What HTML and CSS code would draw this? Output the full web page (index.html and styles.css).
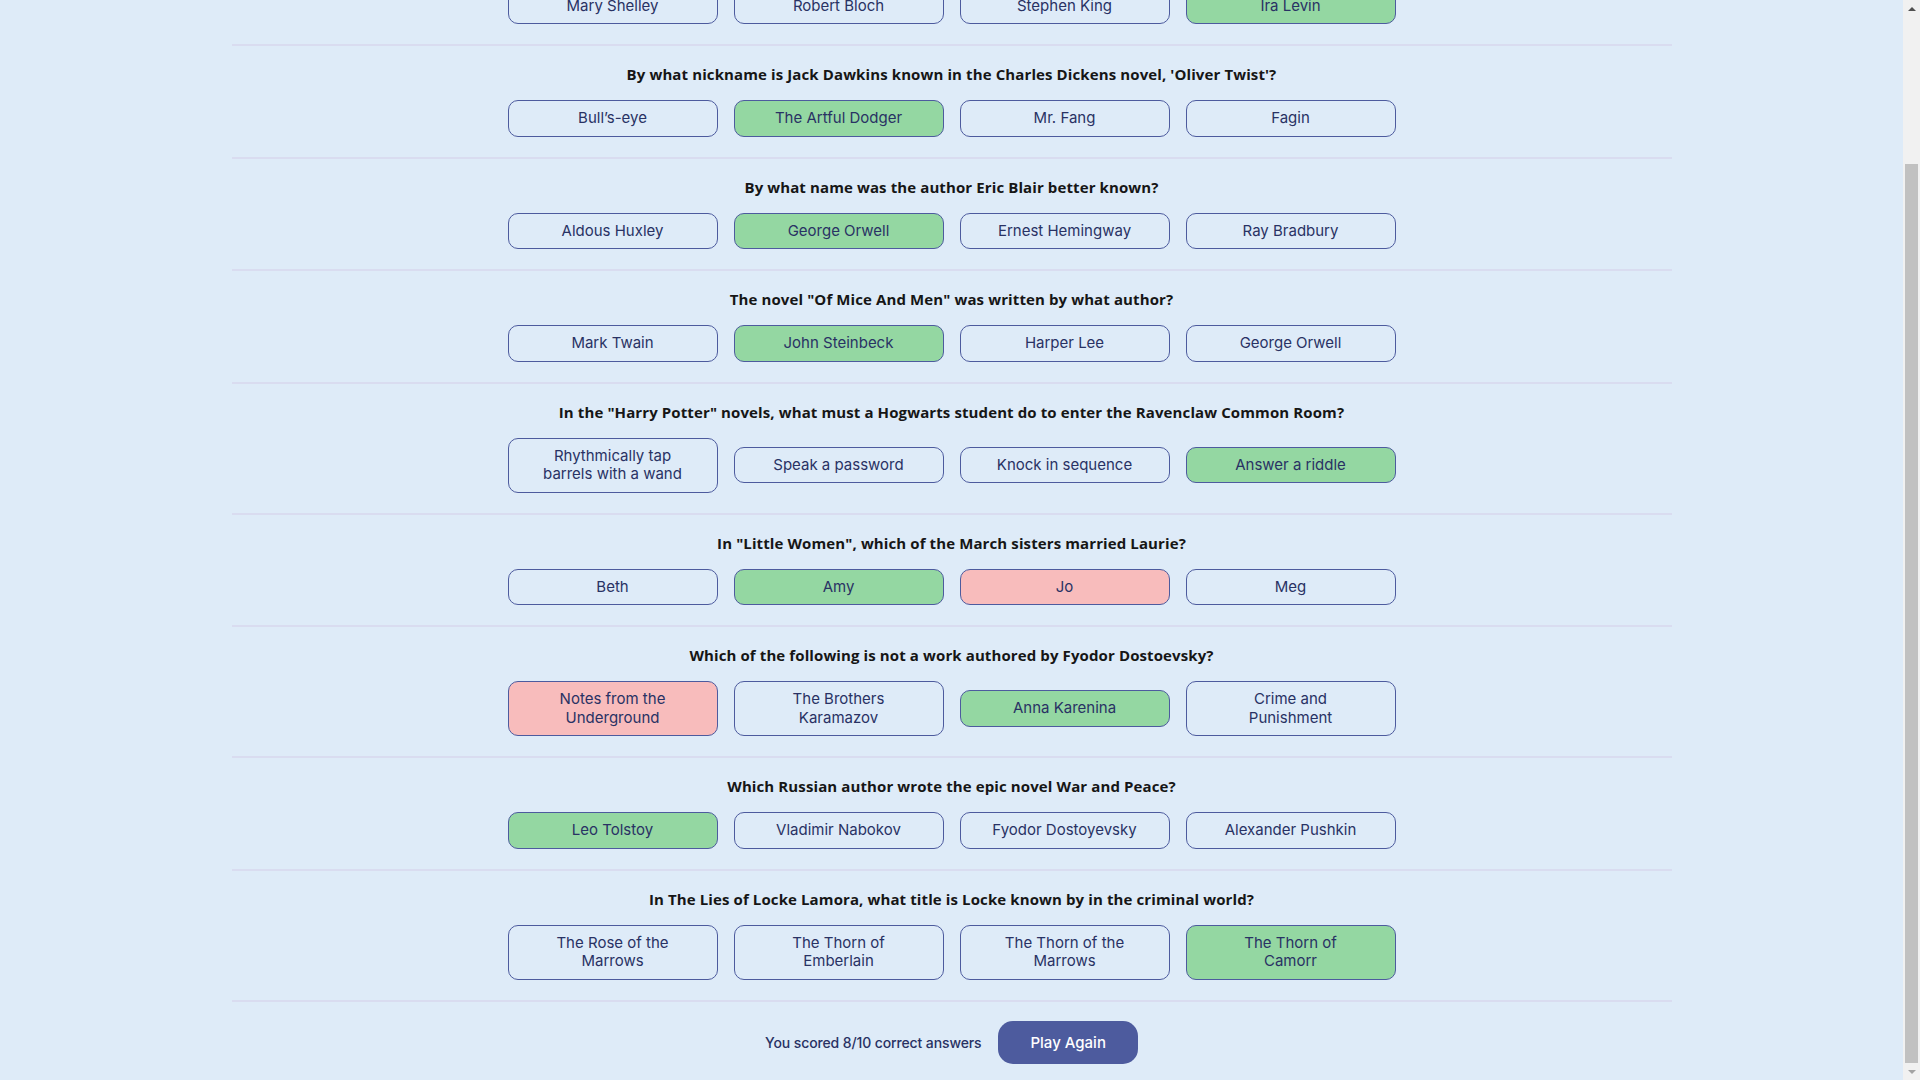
FILE: index.html
```html
<!DOCTYPE html>
<html lang="en">
<head>
<meta charset="utf-8">
<title>Quizzical</title>
<link rel="stylesheet" href="styles.css">
</head>
<body>
<main class="quiz">
  <section class="question">
    <h2 class="q-text">Who is the author of the novel "Jurassic Park"?</h2>
    <div class="answers">
      <button class="answer">Stephen King</button>
      <button class="answer correct">Michael Crichton</button>
      <button class="answer">Dean Koontz</button>
      <button class="answer">Tom Clancy</button>
    </div>
  </section>
  <section class="question">
    <h2 class="q-text">Who wrote the 1967 horror novel "Rosemary's Baby"?</h2>
    <div class="answers">
      <button class="answer">Mary Shelley</button>
      <button class="answer">Robert Bloch</button>
      <button class="answer">Stephen King</button>
      <button class="answer correct">Ira Levin</button>
    </div>
  </section>
  <section class="question">
    <h2 class="q-text">By what nickname is Jack Dawkins known in the Charles Dickens novel, 'Oliver Twist'?</h2>
    <div class="answers">
      <button class="answer">Bull’s-eye</button>
      <button class="answer correct">The Artful Dodger</button>
      <button class="answer">Mr. Fang</button>
      <button class="answer">Fagin</button>
    </div>
  </section>
  <section class="question">
    <h2 class="q-text">By what name was the author Eric Blair better known?</h2>
    <div class="answers">
      <button class="answer">Aldous Huxley</button>
      <button class="answer correct">George Orwell</button>
      <button class="answer">Ernest Hemingway</button>
      <button class="answer">Ray Bradbury</button>
    </div>
  </section>
  <section class="question">
    <h2 class="q-text">The novel "Of Mice And Men" was written by what author?</h2>
    <div class="answers">
      <button class="answer">Mark Twain</button>
      <button class="answer correct">John Steinbeck</button>
      <button class="answer">Harper Lee</button>
      <button class="answer">George Orwell</button>
    </div>
  </section>
  <section class="question">
    <h2 class="q-text">In the "Harry Potter" novels, what must a Hogwarts student do to enter the Ravenclaw Common Room?</h2>
    <div class="answers">
      <button class="answer">Rhythmically tap barrels with a wand</button>
      <button class="answer">Speak a password</button>
      <button class="answer">Knock in sequence</button>
      <button class="answer correct">Answer a riddle</button>
    </div>
  </section>
  <section class="question">
    <h2 class="q-text">In "Little Women", which of the March sisters married Laurie?</h2>
    <div class="answers">
      <button class="answer">Beth</button>
      <button class="answer correct">Amy</button>
      <button class="answer wrong">Jo</button>
      <button class="answer">Meg</button>
    </div>
  </section>
  <section class="question">
    <h2 class="q-text">Which of the following is not a work authored by Fyodor Dostoevsky?</h2>
    <div class="answers">
      <button class="answer wrong">Notes from the Underground</button>
      <button class="answer">The Brothers Karamazov</button>
      <button class="answer correct">Anna Karenina</button>
      <button class="answer">Crime and Punishment</button>
    </div>
  </section>
  <section class="question">
    <h2 class="q-text">Which Russian author wrote the epic novel War and Peace?</h2>
    <div class="answers">
      <button class="answer correct">Leo Tolstoy</button>
      <button class="answer">Vladimir Nabokov</button>
      <button class="answer">Fyodor Dostoyevsky</button>
      <button class="answer">Alexander Pushkin</button>
    </div>
  </section>
  <section class="question">
    <h2 class="q-text">In The Lies of Locke Lamora, what title is Locke known by in the criminal world?</h2>
    <div class="answers">
      <button class="answer">The Rose of the Marrows</button>
      <button class="answer">The Thorn of Emberlain</button>
      <button class="answer">The Thorn of the Marrows</button>
      <button class="answer correct">The Thorn of Camorr</button>
    </div>
  </section>
  <footer class="result">
    <p class="score">You scored 8/10 correct answers</p>
    <button class="play-again">Play Again</button>
  </footer>
</main>
<div class="scrollbar" aria-hidden="true">
  <div class="sb-btn"><span class="arrow-up"></span></div>
  <div class="sb-track"><div class="sb-thumb"></div></div>
  <div class="sb-btn"><span class="arrow-down"></span></div>
</div>
<script src="app.js"></script>
</body>
</html>
```
FILE: styles.css
```css
html, body {
  margin: 0;
  padding: 0;
  background: #deebf8;
}

body {
  padding-right: 17px;
  font-family: "Inter", "Liberation Sans", sans-serif;
  color: #293264;
}

.quiz {
  width: 1440px;
  margin: 0 auto;
}

.question {
  display: flex;
  flex-direction: column;
  align-items: center;
  gap: 16px;
  padding: 19px 0 20px;
  border-bottom: 2px solid #d9dcf0;
}

.q-text {
  margin: 0;
  font-family: "Open Sans", "Noto Sans", sans-serif;
  font-weight: 700;
  font-size: 15px;
  line-height: 19px;
  letter-spacing: 0.11px;
  color: #161616;
  text-align: center;
}

.answers {
  display: grid;
  grid-template-columns: repeat(4, 210px);
  gap: 16px;
  align-items: center;
}

.answer {
  box-sizing: border-box;
  width: 210px;
  margin: 0;
  padding: 8px 31px;
  border: 1px solid #4d5b9e;
  border-radius: 10px;
  background: transparent;
  font-family: "Inter", sans-serif;
  font-size: 15px;
  font-weight: 400;
  line-height: 18.5px;
  color: #293264;
  text-align: center;
}

.answer.correct {
  background: #94d7a2;
}

.answer.wrong {
  background: #f8bcbc;
}

.result {
  display: flex;
  justify-content: center;
  align-items: center;
  gap: 17px;
  padding: 19px 0 16px;
}

.score {
  margin: 0;
  font-family: "Inter", sans-serif;
  font-size: 14px;
  font-weight: 500;
  letter-spacing: -0.12px;
  color: #293264;
}

.play-again {
  margin: 0;
  padding: 12px 32px;
  border: none;
  border-radius: 15px;
  background: #4d5b9e;
  color: #ffffff;
  font-family: "Inter", sans-serif;
  font-size: 15px;
  font-weight: 500;
  line-height: 19px;
}

/* classic browser scrollbar, scrolled to the bottom */
.scrollbar {
  position: fixed;
  top: 0;
  right: 0;
  width: 17px;
  height: 100vh;
  background: #f1f1f1;
  display: flex;
  flex-direction: column;
}

.sb-btn {
  height: 17px;
  flex: none;
  display: flex;
  align-items: center;
  justify-content: center;
}

.arrow-up {
  width: 0;
  height: 0;
  border-left: 4px solid transparent;
  border-right: 4px solid transparent;
  border-bottom: 4px solid #505050;
}

.arrow-down {
  width: 0;
  height: 0;
  border-left: 4px solid transparent;
  border-right: 4px solid transparent;
  border-top: 4px solid #a3a3a3;
}

.sb-track {
  flex: 1;
  display: flex;
  flex-direction: column;
  justify-content: flex-end;
  padding: 0 2px;
}

.sb-thumb {
  height: 899px;
  background: #c1c1c1;
}
```
FILE: app.js
```js
window.scrollTo(0, document.documentElement.scrollHeight);
```
